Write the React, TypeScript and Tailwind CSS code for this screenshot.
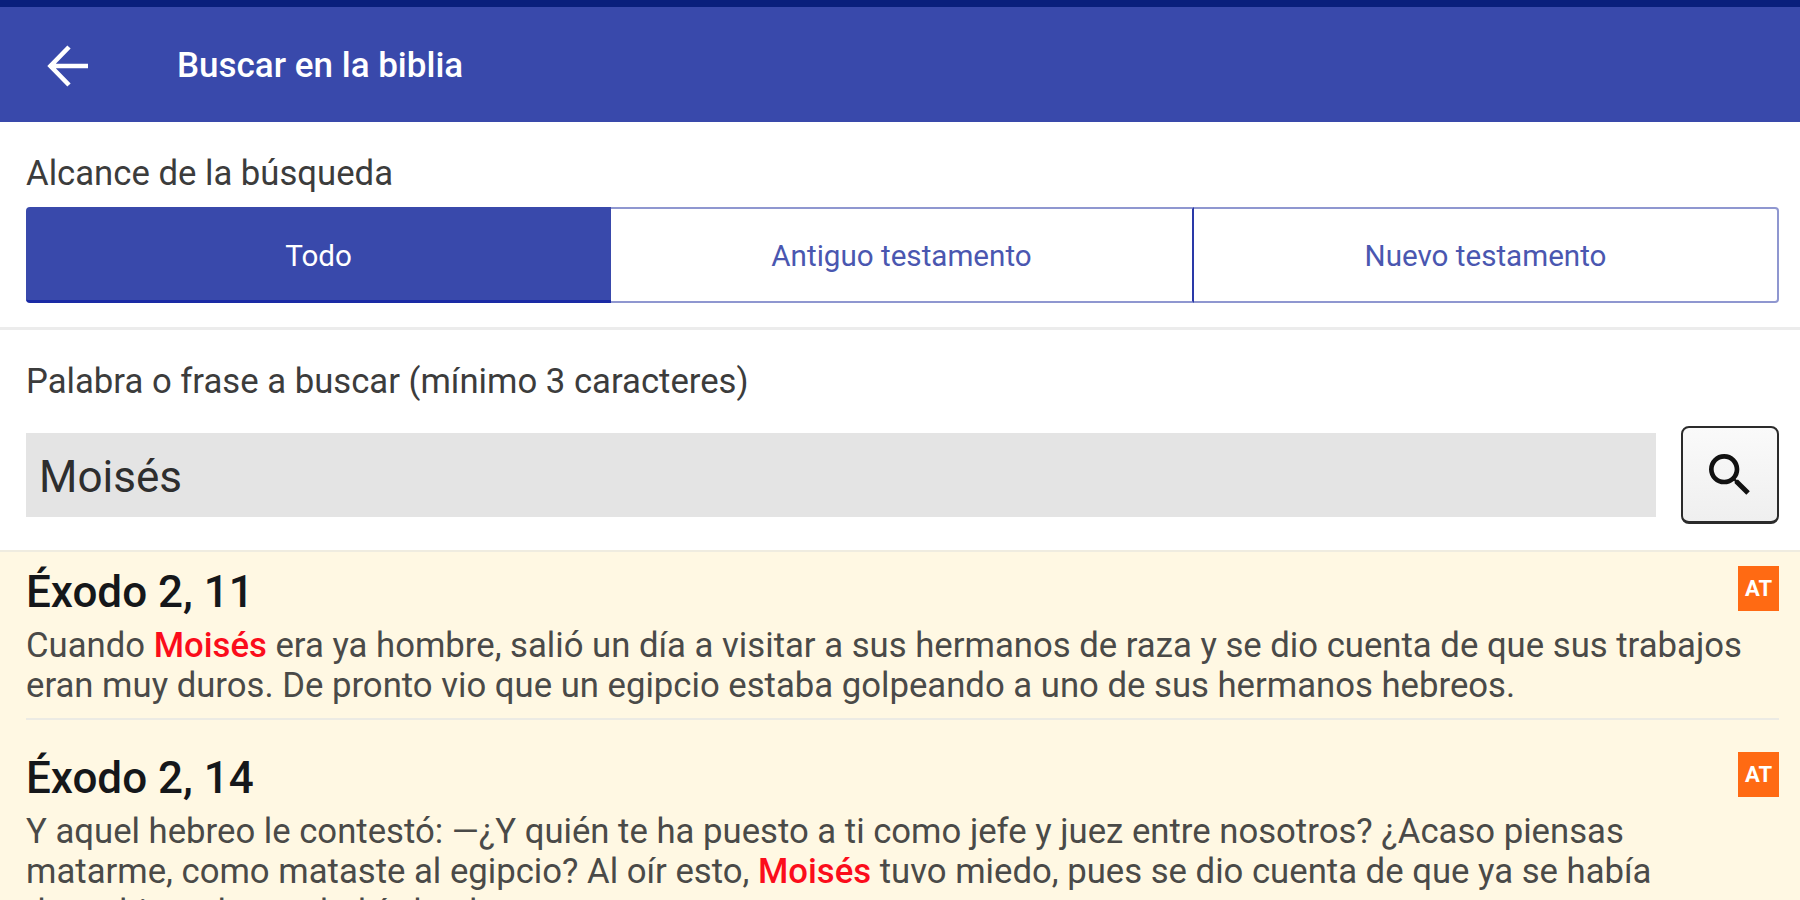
import { MdSearch } from "react-icons/md";

const Hit = ({ children }: { children: React.ReactNode }) => (
  <span className="font-medium text-[#fb0d1b]">{children}</span>
);

const Verse = ({
  title,
  children,
  last,
}: {
  title: string;
  children: React.ReactNode;
  last?: boolean;
}) => (
  <div className={`relative ${last ? "pt-[35px]" : "h-[168px] border-b-2 border-[#ecebe4] pt-[17px]"}`}>
    <h2 className="text-[44px] leading-[46px] font-medium text-[#15171a]">{title}</h2>
    <p className="mt-[9.5px] text-[34.7px] leading-[40.5px] text-[#4a4a48]">{children}</p>
    <div className={`absolute right-0 flex h-[45px] w-[41px] items-center justify-center bg-[#ff6a13] text-[22px] font-bold text-white ${last ? "top-[32px]" : "top-[14px]"}`}>
      AT
    </div>
  </div>
);

export default function App() {
  return (
    <div className="flex h-[900px] w-[1800px] flex-col overflow-hidden bg-white font-['Roboto',sans-serif]">
      <div className="h-[7px] bg-[#0a1f7c]" />
      <header className="flex h-[115px] shrink-0 items-center bg-[#3949ab] text-white">
        <svg className="ml-[46px] h-[44px] w-[44px]" viewBox="0 0 44 44" fill="none" stroke="currentColor" strokeWidth="4.6">
          <path d="M42 23H6M23 4 4.5 23 23 42" />
        </svg>
        <h1 className="ml-[87px] pt-[4px] text-[35px] font-medium">Buscar en la biblia</h1>
      </header>

      <section className="h-[208px] shrink-0 border-b-[3px] border-[#ececec] pr-[21px] pl-[26px] pt-[30px]">
        <div className="text-[34.7px] leading-[42px] text-[#3c3c3c]">Alcance de la búsqueda</div>
        <div className="mt-[13px] flex h-[96px] text-[29.6px]">
          <div className="flex w-[585px] items-center justify-center rounded-l-[4px] border-b-[3px] border-[#1a2aa5] bg-[#3949ab] pt-[5px] text-white">
            Todo
          </div>
          <div className="flex w-[583px] items-center justify-center border-y-2 border-[#8f97d0] border-r-2 border-r-[#2a39a8] pt-[3px] text-[#4a57b0]">
            Antiguo testamento
          </div>
          <div className="flex flex-1 items-center justify-center rounded-r-[4px] border-y-2 border-r-2 border-[#8f97d0] pt-[3px] text-[#4a57b0]">
            Nuevo testamento
          </div>
        </div>
      </section>

      <section className="h-[222px] shrink-0 border-b-2 border-[#efece0] pr-[21px] pl-[26px] pt-[30px]">
        <div className="text-[34.7px] leading-[42px] text-[#3c3c3c]">
          Palabra o frase a buscar (mínimo 3 caracteres)
        </div>
        <div className="mt-[24px] flex items-center justify-between">
          <div className="flex h-[84px] w-[1630px] items-center bg-[#e4e4e4] px-[13px] pt-[3px] text-[44px] text-[#2e2e2e]">
            Moisés
          </div>
          <button className="flex h-[98px] w-[98px] items-center justify-center rounded-[8px] border-2 border-b-[3px] border-[#2b2b2b] bg-gradient-to-b from-[#fafafa] to-[#efefef]">
            <MdSearch className="h-[56px] w-[56px] text-[#111]" />
          </button>
        </div>
      </section>

      <main className="flex-1 overflow-hidden bg-[#fff8e3] pr-[21px] pl-[26px]">
        <Verse title="Éxodo 2, 11">
          Cuando <Hit>Moisés</Hit> era ya hombre, salió un día a visitar a sus hermanos de raza y se dio cuenta de que sus trabajos
          eran muy duros. De pronto vio que un egipcio estaba golpeando a uno de sus hermanos hebreos.
        </Verse>
        <Verse title="Éxodo 2, 14" last>
          Y aquel hebreo le contestó: —¿Y quién te ha puesto a ti como jefe y juez entre nosotros? ¿Acaso piensas
          matarme, como mataste al egipcio? Al oír esto, <Hit>Moisés</Hit> tuvo miedo, pues se dio cuenta de que ya se había
          descubierto lo que había hecho.
        </Verse>
      </main>
    </div>
  );
}
